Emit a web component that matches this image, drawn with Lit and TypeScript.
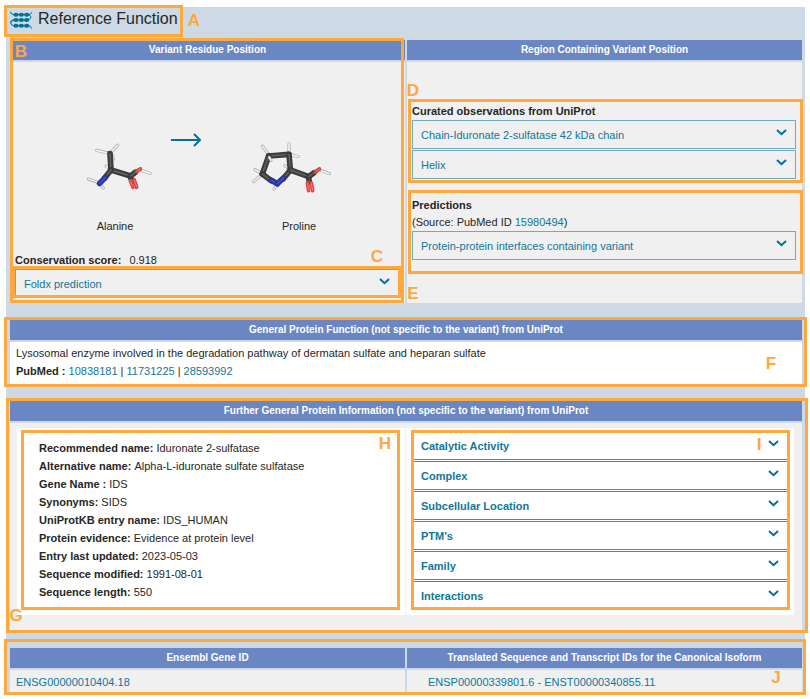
import { LitElement, html, css, svg } from "lit";
import { customElement, property } from "lit/decorators.js";

const BLUE = "#007398";

const proteinFacts: [string, string][] = [
  ["Recommended name:", "Iduronate 2-sulfatase"],
  ["Alternative name:", "Alpha-L-iduronate sulfate sulfatase"],
  ["Gene Name :", "IDS"],
  ["Synonyms:", "SIDS"],
  ["UniProtKB entry name:", "IDS_HUMAN"],
  ["Protein evidence:", "Evidence at protein level"],
  ["Entry last updated:", "2023-05-03"],
  ["Sequence modified:", "1991-08-01"],
  ["Sequence length:", "550"],
];

const topics = [
  "Catalytic Activity",
  "Complex",
  "Subcellular Location",
  "PTM's",
  "Family",
  "Interactions",
];

type Bond = [number, number, number, number, "c" | "n" | "o" | "h"];
const tones = {
  c: ["#3c3c3c", "#666666", 17, 4],
  n: ["#2a35a0", "#4a57c0", 17, 4],
  o: ["#dd4541", "#ee7a75", 11, 3],
  h: ["#a2a2a2", "#f4f4f4", 9, 5],
} as const;

const drawBonds = (bonds: Bond[]) =>
  bonds.map(([x1, y1, x2, y2, kind]) => {
    const [edge, shine, width, core] = tones[kind];
    return svg`
      <line x1=${x1} y1=${y1} x2=${x2} y2=${y2} stroke=${edge} stroke-width=${width} stroke-linecap="round"></line>
      <line x1=${x1} y1=${y1} x2=${x2} y2=${y2} stroke=${shine} stroke-width=${core} stroke-linecap="round"></line>`;
  });

const alanine: Bond[] = [
  [108, 138, 118, 146, "h"],
  [118, 100, 80, 91, "h"],
  [122, 98, 143, 75, "h"],
  [126, 104, 130, 117, "h"],
  [120, 101, 123, 150, "c"],
  [123, 150, 182, 168, "c"],
  [123, 150, 104, 174, "c"],
  [84, 187, 55, 177, "h"],
  [88, 192, 100, 204, "h"],
  [106, 172, 89, 190, "n"],
  [182, 174, 187, 184, "c"],
  [181, 182, 189, 202, "o"],
  [193, 180, 200, 202, "o"],
  [182, 168, 196, 157, "c"],
  [216, 152, 241, 160, "h"],
  [200, 154, 211, 147, "o"],
  [203, 152, 211, 147, "o"],
];

const proline: Bond[] = [
  [596, 103, 577, 78, "h"],
  [657, 98, 657, 71, "h"],
  [662, 104, 685, 110, "h"],
  [576, 160, 555, 149, "h"],
  [576, 164, 551, 185, "h"],
  [622, 192, 612, 207, "h"],
  [645, 137, 656, 145, "h"],
  [596, 108, 657, 103, "c"],
  [657, 103, 661, 150, "c"],
  [596, 108, 577, 162, "c"],
  [577, 162, 604, 182, "c"],
  [661, 150, 640, 176, "c"],
  [604, 181, 622, 191, "n"],
  [640, 174, 622, 191, "n"],
  [661, 150, 716, 170, "c"],
  [598, 112, 603, 121, "h"],
  [716, 174, 718, 186, "c"],
  [712, 189, 716, 212, "o"],
  [724, 189, 728, 212, "o"],
  [716, 170, 732, 158, "c"],
  [754, 152, 778, 161, "h"],
  [736, 156, 748, 147, "o"],
  [740, 153, 748, 147, "o"],
];

const base = css`
  *,
  *::before,
  *::after {
    box-sizing: border-box;
  }
`;

@customElement("fold-button")
class FoldButton extends LitElement {
  @property() label = "";
  @property({ type: Boolean, reflect: true }) strong = false;

  static styles = [
    base,
    css`
      :host {
        display: block;
      }
      .fold {
        display: flex;
        align-items: center;
        justify-content: space-between;
        width: 100%;
        height: 29px;
        padding: 0 8px;
        border: 1px solid #6faac0;
        background: transparent;
        color: #11769a;
        font: 11px/18px "Liberation Sans", Arial, sans-serif;
        text-align: left;
        cursor: pointer;
      }
      :host([strong]) .fold {
        border-color: #3a8fae;
        font-weight: bold;
      }
      .chevron {
        width: 11px;
        height: 7px;
        margin-bottom: 4px;
      }
    `,
  ];

  render() {
    return html`<button class="fold" type="button" aria-expanded="false">
      <span>${this.label}</span>
      <svg class="chevron" viewBox="0 0 11 7" aria-hidden="true">
        <path d="M1 1 L5.5 5.2 L10 1" fill="none" stroke=${BLUE} stroke-width="2"></path>
      </svg>
    </button>`;
  }
}

@customElement("app-root")
class AppRoot extends LitElement {
  static styles = [
    base,
    css`
      :host {
        display: block;
        padding: 7px 5px 6px 6px;
        background: #fff;
        color: #262626;
        font: 11px/18px "Liberation Sans", Arial, sans-serif;
      }
      a {
        color: #11769a;
        text-decoration: none;
      }
      .panel {
        padding: 0 3px 0 4px;
        background: #cdd9e5;
      }
      .block {
        position: relative;
        margin-bottom: 17px;
      }
      .title-row {
        position: relative;
        display: flex;
        align-items: flex-start;
        gap: 6px;
        height: 33px;
        padding-top: 3px;
      }
      .logo {
        width: 22px;
        height: 18px;
        margin-top: 1px;
      }
      h1 {
        margin: 0;
        font-size: 16px;
        font-weight: normal;
        line-height: 18px;
      }
      h2,
      th {
        margin: 0;
        padding: 0;
        height: 22px;
        border-bottom: 2px solid #cbd8ea;
        background: #6a87c3;
        background-clip: padding-box;
        color: #fff;
        font-size: 10px;
        font-weight: bold;
        line-height: 20px;
        text-align: center;
      }
      h3 {
        margin: 0;
        font-size: 11px;
        line-height: 18px;
      }
      .columns {
        display: grid;
        grid-template-columns: 1fr 1fr;
        gap: 2px;
      }
      .column {
        display: flex;
        flex-direction: column;
        background: #f0f0f0;
      }
      .change {
        display: grid;
        grid-template-columns: 110px 74px 110px;
        padding: 66px 0 16px 50px;
      }
      figure {
        margin: 0;
        text-align: center;
      }
      .molecule {
        display: block;
        width: 110px;
        height: 72px;
        margin-bottom: 17px;
      }
      .arrow {
        width: 32px;
        height: 24px;
      }
      .score {
        padding: 0 6px 5px 5px;
      }
      .score p {
        margin: 0;
      }
      .score b {
        margin-right: 5px;
      }
      .region {
        padding: 40px 6px 0 5px;
      }
      .stack {
        display: grid;
        gap: 1px;
      }
      .predictions {
        padding-top: 18px;
        line-height: 17px;
      }
      .predictions h3 {
        line-height: 17px;
      }
      .predictions p {
        margin: 0;
      }
      .function-text {
        padding: 2px 6px 4px;
        background: #fff;
      }
      .function-text p {
        margin: 0;
      }
      .details {
        display: grid;
        grid-template-columns: 1fr 1fr;
        gap: 1px;
        padding: 5px 8px 15px 7px;
        background: #f0f0f0;
      }
      .facts,
      .topics {
        position: relative;
        background: #fff;
      }
      .facts dl {
        margin: 0;
        padding: 11px 22px;
      }
      dt,
      dd {
        display: inline;
        margin: 0;
      }
      dt {
        font-weight: bold;
      }
      .topics {
        padding: 3px 6px 5px;
      }
      .last {
        margin-bottom: 0;
        padding-top: 1px;
      }
      table {
        width: 100%;
        border-spacing: 0;
        table-layout: fixed;
      }
      th:first-child,
      td:first-child {
        border-right: 1px solid #cbd8ea;
      }
      th:last-child,
      td:last-child {
        border-left: 1px solid #cbd8ea;
      }
      td {
        height: 23px;
        padding: 0 6px;
        background: #f0f0f0;
      }
      td:last-child {
        padding-left: 21px;
      }
      .note {
        position: absolute;
        border: 3px solid #ffa83d;
        pointer-events: none;
      }
      .letter {
        position: absolute;
        width: 18px;
        color: #ffa83d;
        font-size: 17px;
        font-weight: bold;
        line-height: 18px;
        text-align: center;
      }
      .note-a {
        top: -2px;
        left: -6px;
        width: 179px;
        height: 32px;
      }
      .note-a .letter {
        top: 4px;
        left: 178px;
      }
      .note-b {
        inset: -2px calc(50% + 2px) 0 0;
      }
      .note-b .letter {
        top: 2px;
        left: -1px;
      }
      .note-c {
        left: 2px;
        right: calc(50% + 5px);
        bottom: 5px;
        height: 32px;
      }
      .note-c .letter {
        top: -21px;
        right: 12px;
      }
      .note-d {
        top: 59px;
        left: calc(50% + 2px);
        right: -1px;
        height: 84px;
      }
      .note-d .letter {
        top: -20px;
        left: -7px;
      }
      .note-e {
        top: 150px;
        left: calc(50% + 2px);
        right: -1px;
        height: 84px;
      }
      .note-e .letter {
        bottom: -32px;
        left: -7px;
      }
      .note-f {
        inset: -3px -5px -3px -6px;
      }
      .note-f .letter {
        top: 35px;
        right: 24px;
      }
      .note-g {
        inset: -3px -6px -3px -4px;
      }
      .note-g .letter {
        bottom: 5px;
        left: -2px;
      }
      .note-h {
        inset: 2px 5px 5px 4px;
      }
      .note-h .letter {
        top: 2px;
        right: 3px;
      }
      .note-i {
        inset: 2px 4px 5px 5px;
      }
      .note-i .letter {
        top: 3px;
        right: 19px;
      }
      .note-j {
        inset: -8px -4px -2px -6px;
      }
      .note-j .letter {
        top: 27px;
        right: 18px;
      }
    `,
  ];

  private note(letter: string) {
    return html`<div class="note note-${letter.toLowerCase()}">
      <span class="letter">${letter}</span>
    </div>`;
  }

  render() {
    return html`<main class="panel">
      <header class="title-row">
        <svg class="logo" viewBox="0 0 66 54" aria-hidden="true">
          <g fill="none" stroke=${BLUE} stroke-width="3">
            <path d="M1 2 Q2 11 12 11 H54 Q64 11 65 4"></path>
            <path d="M56 11 Q66 16 62 22 Q58 27 50 27 H12 Q1 27 2 36"></path>
            <path d="M12 27 Q2 30 2 36 Q3 44 12 44 H54 Q64 44 65 53"></path>
          </g>
          <g fill=${BLUE}>
            ${[11, 27, 44].map((y) =>
              [18, 34, 50].map((x) => svg`<ellipse cx=${x} cy=${y} rx="8" ry="6"></ellipse>`)
            )}
          </g>
        </svg>
        <h1>Reference Function</h1>
        ${this.note("A")}
      </header>

      <section class="block">
        <div class="columns">
          <div class="column">
            <h2>Variant Residue Position</h2>
            <div class="change">
              <figure>
                <svg class="molecule" viewBox="-30 24 330 216" aria-hidden="true">${drawBonds(alanine)}</svg>
                <figcaption>Alanine</figcaption>
              </figure>
              <svg class="arrow" viewBox="0 0 32 24" aria-hidden="true">
                <path d="M1 12 H30 M24 6 L30 12 L24 18" fill="none" stroke=${BLUE} stroke-width="2"></path>
              </svg>
              <figure>
                <svg class="molecule" viewBox="522 24 330 216" aria-hidden="true">${drawBonds(proline)}</svg>
                <figcaption>Proline</figcaption>
              </figure>
            </div>
            <div class="score">
              <p><b>Conservation score:</b> 0.918</p>
              <fold-button label="Foldx prediction"></fold-button>
            </div>
          </div>
          <div class="column">
            <h2>Region Containing Variant Position</h2>
            <div class="region">
              <h3>Curated observations from UniProt</h3>
              <div class="stack">
                <fold-button label="Chain-Iduronate 2-sulfatase 42 kDa chain"></fold-button>
                <fold-button label="Helix"></fold-button>
              </div>
              <div class="predictions">
                <h3>Predictions</h3>
                <p>(Source: PubMed ID <a href="#15980494">15980494</a>)</p>
                <fold-button label="Protein-protein interfaces containing variant"></fold-button>
              </div>
            </div>
          </div>
        </div>
        ${["B", "C", "D", "E"].map((l) => this.note(l))}
      </section>

      <section class="block">
        <h2>General Protein Function (not specific to the variant) from UniProt</h2>
        <div class="function-text">
          <p>Lysosomal enzyme involved in the degradation pathway of dermatan sulfate and heparan sulfate</p>
          <p>
            <b>PubMed :</b> <a href="#10838181">10838181</a> | <a href="#11731225">11731225</a> |
            <a href="#28593992">28593992</a>
          </p>
        </div>
        ${this.note("F")}
      </section>

      <section class="block">
        <h2>Further General Protein Information (not specific to the variant) from UniProt</h2>
        <div class="details">
          <div class="facts">
            <dl>
              ${proteinFacts.map(([name, value]) => html`<div><dt>${name}</dt> <dd>${value}</dd></div>`)}
            </dl>
            ${this.note("H")}
          </div>
          <div class="topics">
            <div class="stack">
              ${topics.map((t) => html`<fold-button strong label=${t}></fold-button>`)}
            </div>
            ${this.note("I")}
          </div>
        </div>
        ${this.note("G")}
      </section>

      <section class="block last">
        <table>
          <thead>
            <tr>
              <th scope="col">Ensembl Gene ID</th>
              <th scope="col">Translated Sequence and Transcript IDs for the Canonical Isoform</th>
            </tr>
          </thead>
          <tbody>
            <tr>
              <td><a href="#ENSG00000010404">ENSG00000010404.18</a></td>
              <td><a href="#ENSP00000339801">ENSP00000339801.6 - ENST00000340855.11</a></td>
            </tr>
          </tbody>
        </table>
        ${this.note("J")}
      </section>
    </main>`;
  }
}
